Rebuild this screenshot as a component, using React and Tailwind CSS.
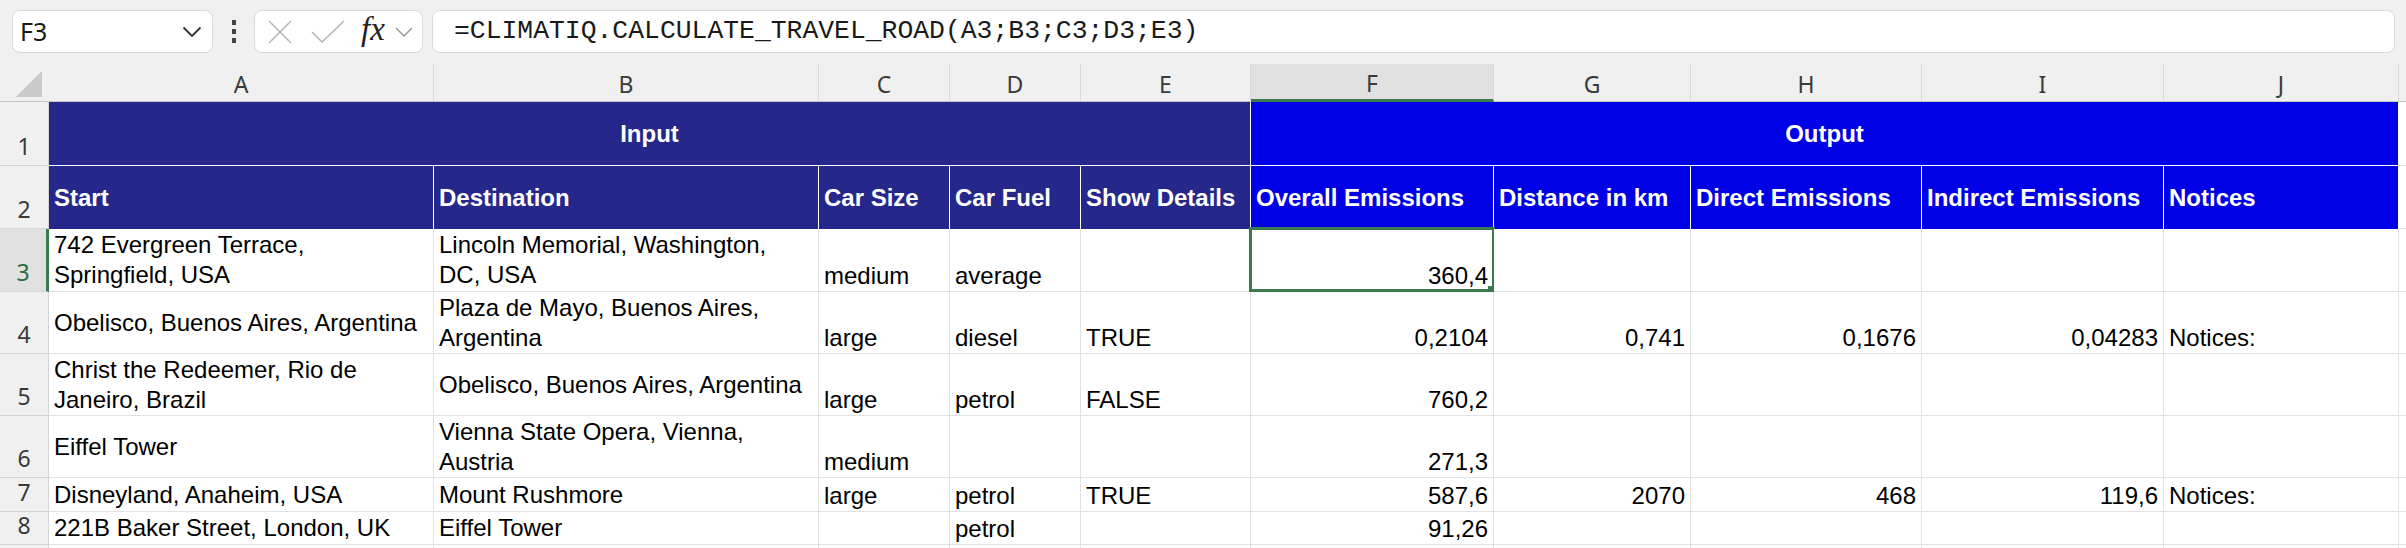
import React from "react";

const SANS = "font-['Liberation_Sans',Arial,sans-serif]";
const UI = "font-['Noto_Sans','Open_Sans',sans-serif]";

const LETTERS = ["A", "B", "C", "D", "E", "F", "G", "H", "I", "J"];

const HEADERS = [
  "Start",
  "Destination",
  "Car Size",
  "Car Fuel",
  "Show Details",
  "Overall Emissions",
  "Distance in km",
  "Direct Emissions",
  "Indirect Emissions",
  "Notices",
];

// each entry: [A, B, C, D, E, F, G, H, I, J]; arrays are wrapped lines
const ROWS = [
  {
    n: 3,
    cells: [
      ["742 Evergreen Terrace,", "Springfield, USA"],
      ["Lincoln Memorial, Washington,", "DC, USA"],
      "medium",
      "average",
      "",
      "360,4",
      "",
      "",
      "",
      "",
    ],
  },
  {
    n: 4,
    cells: [
      ["Obelisco, Buenos Aires, Argentina"],
      ["Plaza de Mayo, Buenos Aires,", "Argentina"],
      "large",
      "diesel",
      "TRUE",
      "0,2104",
      "0,741",
      "0,1676",
      "0,04283",
      "Notices:",
    ],
  },
  {
    n: 5,
    cells: [
      ["Christ the Redeemer, Rio de", "Janeiro, Brazil"],
      ["Obelisco, Buenos Aires, Argentina"],
      "large",
      "petrol",
      "FALSE",
      "760,2",
      "",
      "",
      "",
      "",
    ],
  },
  {
    n: 6,
    cells: [
      ["Eiffel Tower"],
      ["Vienna State Opera, Vienna,", "Austria"],
      "medium",
      "",
      "",
      "271,3",
      "",
      "",
      "",
      "",
    ],
  },
  {
    n: 7,
    cells: [
      ["Disneyland, Anaheim, USA"],
      ["Mount Rushmore"],
      "large",
      "petrol",
      "TRUE",
      "587,6",
      "2070",
      "468",
      "119,6",
      "Notices:",
    ],
  },
  {
    n: 8,
    cells: [
      ["221B Baker Street, London, UK"],
      ["Eiffel Tower"],
      "",
      "petrol",
      "",
      "91,26",
      "",
      "",
      "",
      "",
    ],
  },
  // next row, only its top edge is on screen
  { n: 9, cells: ["", "", "", "", "", "", "", "", "", ""] },
];

function Toolbar() {
  return (
    <div className="h-[64px] flex items-start pt-[10px] pl-[12px] pr-[11px] bg-[#f0f0f0]">
      {/* name box */}
      <div className="w-[201px] h-[43px] bg-white border border-[#d9d9d9] rounded-[8px] flex items-center pl-[7px] pr-[10px] justify-between">
        <span className={`${UI} text-[25px] text-[#1a1a1a]`}>F3</span>
        <svg width="20" height="12" viewBox="0 0 20 12">
          <polyline points="1.5,1.5 10,10 18.5,1.5" fill="none" stroke="#333" strokeWidth="1.8" />
        </svg>
      </div>

      {/* more dots */}
      <div className="w-[41px] h-[43px] flex flex-col items-center justify-center gap-[4px]">
        <span className="w-[4px] h-[5px] bg-[#444]" />
        <span className="w-[4px] h-[5px] bg-[#444]" />
        <span className="w-[4px] h-[5px] bg-[#444]" />
      </div>

      {/* cancel / enter / fx */}
      <div className="w-[169px] h-[43px] bg-white border border-[#d9d9d9] rounded-[8px] flex items-center pl-[12px]">
        <svg width="26" height="26" viewBox="0 0 26 26" className="mr-[18px]">
          <line x1="2" y1="2" x2="24" y2="24" stroke="#b5b5b5" strokeWidth="1.6" />
          <line x1="24" y1="2" x2="2" y2="24" stroke="#b5b5b5" strokeWidth="1.6" />
        </svg>
        <svg width="34" height="24" viewBox="0 0 34 24" className="mr-[16px]">
          <polyline points="1,12 11,22 33,1" fill="none" stroke="#b5b5b5" strokeWidth="1.6" />
        </svg>
        <span className="font-['Liberation_Serif',serif] italic text-[33px] leading-none text-[#222] mr-[10px] -mt-[5px]">
          fx
        </span>
        <svg width="18" height="10" viewBox="0 0 18 10">
          <polyline points="1,1 9,9 17,1" fill="none" stroke="#9a9a9a" strokeWidth="1.5" />
        </svg>
      </div>

      {/* formula bar */}
      <div className="flex-1 ml-[9px] h-[43px] bg-white border border-[#d9d9d9] rounded-[8px] flex items-center pl-[21px]">
        <span className="font-['Liberation_Mono',monospace] text-[26.4px] text-[#1a1a1a] whitespace-nowrap">
          =CLIMATIQ.CALCULATE_TRAVEL_ROAD(A3;B3;C3;D3;E3)
        </span>
      </div>
    </div>
  );
}

function TextCell({ value, col, rowN }) {
  const lines = Array.isArray(value) ? value : [value];
  const wrapCol = col < 2;
  const numeric = col >= 5 && col <= 8;
  const selected = rowN === 3 && col === 5;
  return (
    <div
      className={`relative bg-white border-r border-b border-[#e1e1e1] flex flex-col px-[5px] ${
        wrapCol ? "justify-center" : "justify-end"
      } ${numeric ? "items-end" : "items-start"} ${selected ? "" : "overflow-hidden"}`}
    >
      {lines.map((l, i) =>
        l ? (
          <span key={i} className={`${SANS} text-[24px] leading-[30px] text-black whitespace-nowrap`}>
            {l}
          </span>
        ) : null
      )}
      {selected && (
        <>
          <div className="absolute -left-[2px] -top-[2px] -right-[2px] -bottom-[1px] border-[3px] border-[#3b7a4f]" />
          <div className="absolute -right-[4px] -bottom-[4px] w-[9px] h-[9px] bg-[#3b7a4f]" />
        </>
      )}
    </div>
  );
}

export default function App() {
  return (
    <div className="w-[2406px] h-[548px] overflow-hidden bg-white">
      <Toolbar />
      <div className="grid grid-cols-[49px_385px_385px_131px_131px_170px_243px_197px_231px_242px_235px_1fr] grid-rows-[38px_64px_63px_63px_62px_62px_62px_34px_33px_34px]">
        {/* column letters */}
        <div className="bg-[#f0f0f0] border-b border-[#c4c4c4] flex items-end justify-center pb-[3px]">
          <svg width="28" height="28" viewBox="0 0 28 28" className="ml-[8px]">
            <polygon points="27,1 27,27 1,27" fill="#c9c9c9" />
          </svg>
        </div>
        {LETTERS.map((l) => (
          <div
            key={l}
            className={`${
              l === "F" ? "bg-[#e1e1e1] border-b-[3px] border-b-[#3b7a4f]" : "bg-[#f0f0f0] border-b border-b-[#c4c4c4]"
            } border-r border-r-[#d9d9d9] flex items-center justify-center pt-[4px]`}
          >
            <span className={`${UI} text-[23px] text-[#3a3a3a]`}>{l}</span>
          </div>
        ))}
        <div className="bg-[#f0f0f0] border-b border-[#c4c4c4]" />

        {/* row 1 */}
        <div className="bg-[#f0f0f0] border-r border-b border-[#d4d4d4] flex items-end justify-center pb-[2px]">
          <span className={`${UI} text-[23px] text-[#3a3a3a]`}>1</span>
        </div>
        <div className="col-span-5 bg-[#26278a] border-r border-b border-white flex items-center justify-center">
          <span className={`${SANS} font-bold text-[24px] text-white`}>Input</span>
        </div>
        <div className="col-span-5 bg-[#0000e6] border-r border-b border-white flex items-center justify-center">
          <span className={`${SANS} font-bold text-[24px] text-white`}>Output</span>
        </div>
        <div className="bg-white border-b border-[#e1e1e1]" />

        {/* row 2 */}
        <div className="bg-[#f0f0f0] border-r border-b border-[#d4d4d4] flex items-end justify-center pb-[2px]">
          <span className={`${UI} text-[23px] text-[#3a3a3a]`}>2</span>
        </div>
        {HEADERS.map((h, i) => (
          <div
            key={h}
            className={`${i < 5 ? "bg-[#26278a]" : "bg-[#0000e6]"} border-r border-white flex items-center px-[5px] overflow-hidden`}
          >
            <span className={`${SANS} font-bold text-[24px] text-white whitespace-nowrap`}>{h}</span>
          </div>
        ))}
        <div className="bg-white border-b border-[#e1e1e1]" />

        {/* data rows */}
        {ROWS.map((row) => (
          <React.Fragment key={row.n}>
            <div
              className={`${
                row.n === 3 ? "bg-[#e1e1e1] border-r-[3px] border-r-[#3b7a4f]" : "bg-[#f0f0f0] border-r border-r-[#d4d4d4]"
              } border-b border-b-[#d4d4d4] flex items-end justify-center pb-[2px]`}
            >
              {row.n < 9 && (
                <span className={`${UI} text-[23px] ${row.n === 3 ? "text-[#2e6b40]" : "text-[#3a3a3a]"}`}>{row.n}</span>
              )}
            </div>
            {row.cells.map((c, i) => (
              <TextCell key={i} value={c} col={i} rowN={row.n} />
            ))}
            <div className="bg-white border-b border-[#e1e1e1]" />
          </React.Fragment>
        ))}
      </div>
    </div>
  );
}
